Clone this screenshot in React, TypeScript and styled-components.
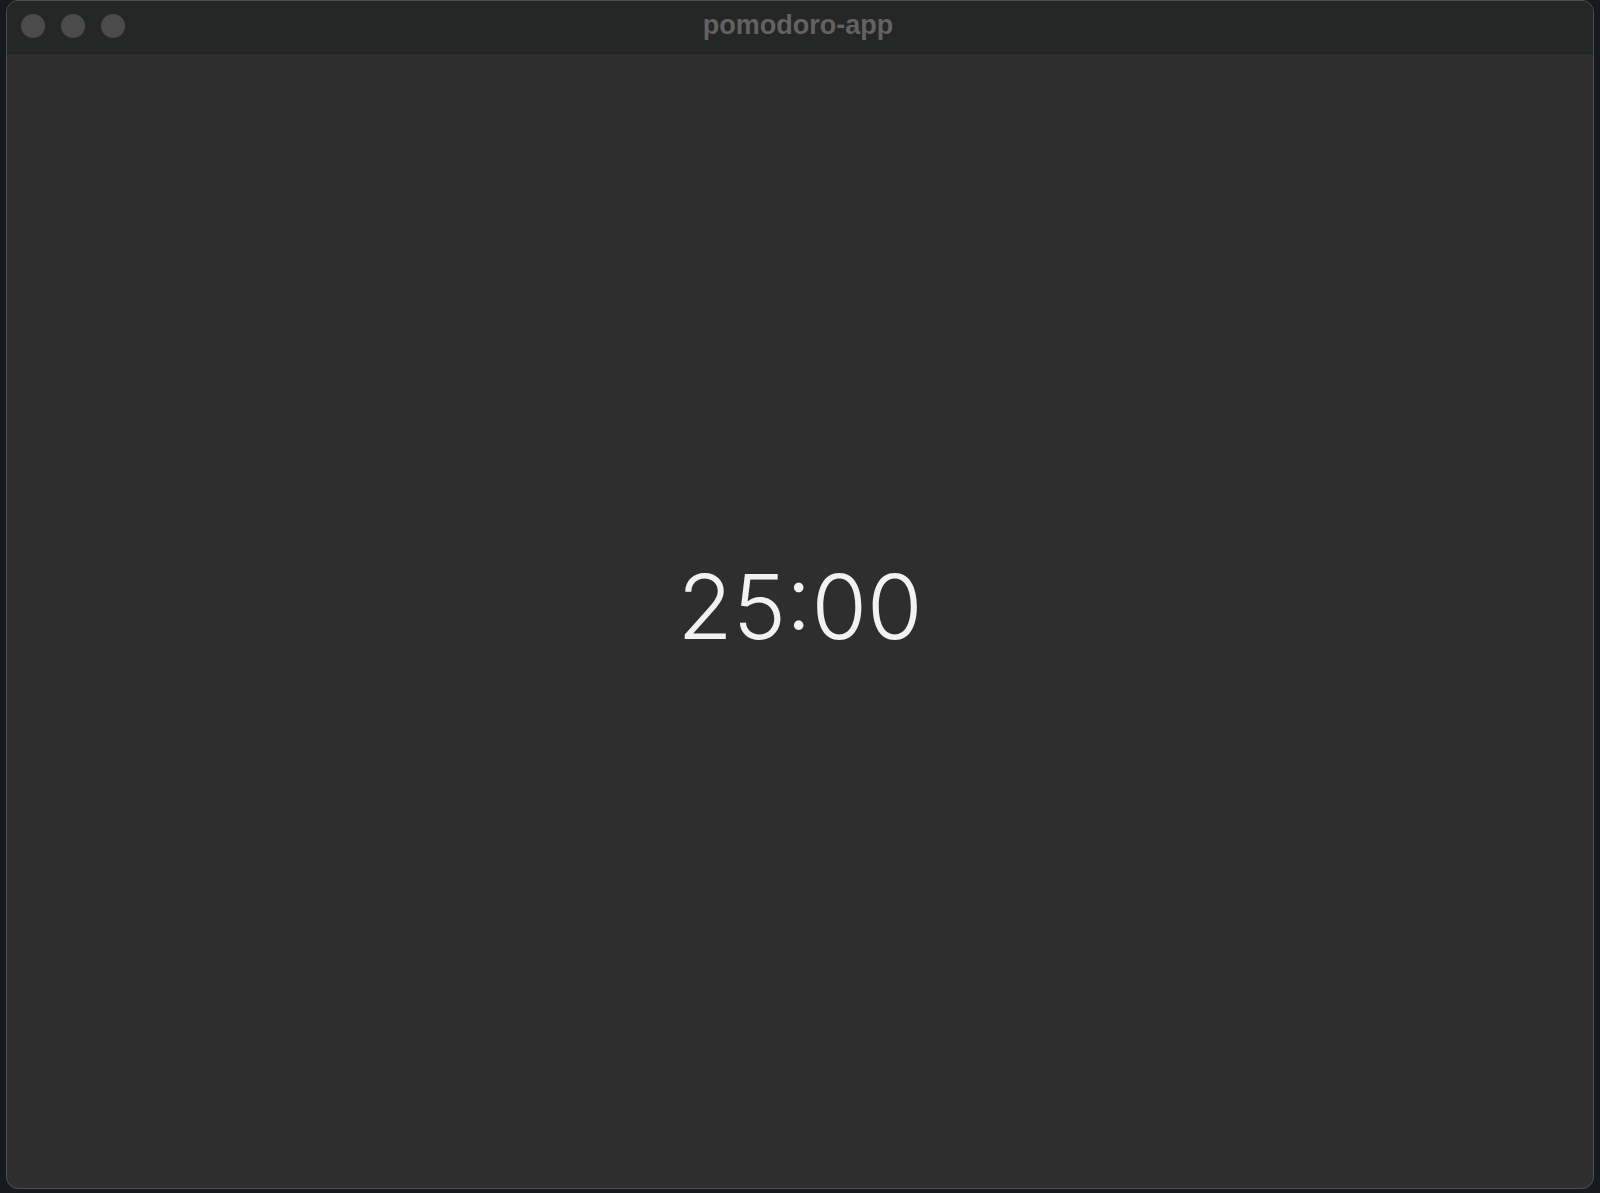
import React from "react";
import styled, { createGlobalStyle } from "styled-components";

const GlobalStyle = createGlobalStyle`
    html, body {
        margin: 0;
        padding: 0;
        height: 100%;
        background: #16191d;
        overflow: hidden;
    }
    #root {
        height: 100%;
    }
`

const Desktop = styled.div`
    height: 100%;
    box-sizing: border-box;
    padding: 0 6px 4px 6px;
    display: flex;
`

const Window = styled.div`
    flex: 1;
    display: flex;
    flex-direction: column;
    border: 1px solid #4f4f4f;
    border-radius: 12px;
    overflow: hidden;
    background: #2e2e2e;
`

const TitleBar = styled.div`
    position: relative;
    height: 52px;
    flex-shrink: 0;
    display: flex;
    align-items: center;
    justify-content: center;
    background: #252626;
    border-bottom: 1px solid #202020;
`

const Lights = styled.div`
    position: absolute;
    left: 14px;
    top: 13px;
    display: flex;
    gap: 16px;
`

const Light = styled.span`
    width: 24px;
    height: 24px;
    border-radius: 50%;
    background: #4b4b4b;
`

const Title = styled.div`
    font-family: "Liberation Sans", Arial, sans-serif;
    font-weight: 700;
    font-size: 27px;
    color: #626262;
    margin-left: -4px;
    margin-top: -4px;
`

const Body = styled.div`
    flex: 1;
    display: flex;
    align-items: center;
    justify-content: center;
    padding-bottom: 30px;
`

const Timer = styled.div`
    font-family: Inter, "Liberation Sans", sans-serif;
    font-weight: 300;
    font-size: 90px;
    color: #f2f2f2;
`

const App = () => {
    return (
        <>
            <GlobalStyle />
            <Desktop>
                <Window>
                    <TitleBar>
                        <Lights>
                            <Light />
                            <Light />
                            <Light />
                        </Lights>
                        <Title>pomodoro-app</Title>
                    </TitleBar>
                    <Body>
                        <Timer>25:00</Timer>
                    </Body>
                </Window>
            </Desktop>
        </>
    )
}

export default App;
